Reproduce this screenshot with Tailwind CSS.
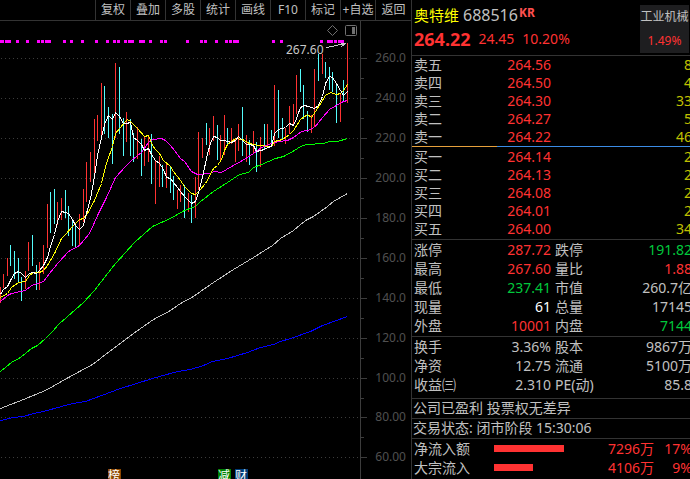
<!doctype html>
<html lang="zh-CN">
  <head>
    <meta charset="utf-8" />
    <meta name="viewport" content="width=device-width, initial-scale=1" />
    <script src="https://cdn.jsdelivr.net/npm/@tailwindcss/browser@4"></script>
    <title>奥特维 688516</title>
  </head>
  <body
    class="flex min-h-screen overflow-hidden bg-black font-['Noto_Sans','Noto_Sans_CJK_SC',sans-serif] text-sm text-[#c0c0c0]"
  >
    <main class="flex-1 min-w-0">
      <nav
        class="flex justify-end h-[21px] border-b border-[#333333] text-xs whitespace-nowrap"
      >
        <button class="w-[35px] border-l border-[#333333]">复权</button>
        <button class="w-[35px] border-l border-[#333333]">叠加</button>
        <button class="w-[35px] border-l border-[#333333]">多股</button>
        <button class="w-[35px] border-l border-[#333333]">统计</button>
        <button class="w-[35px] border-l border-[#333333]">画线</button>
        <button class="w-[35px] border-l border-[#333333]">F10</button>
        <button class="w-[35px] border-l border-[#333333]">标记</button>
        <button class="w-[35px] border-l border-[#333333]">+自选</button>
        <button class="w-[36px] border-l border-[#333333]">返回</button>
      </nav>

      <svg class="block w-full h-auto" viewBox="0 21 411 458" fill="none">
        <!-- grid -->
        <path
          transform="translate(1 .5)"
          stroke="#3c3c3c"
          stroke-dasharray="1 3"
          shape-rendering="crispEdges"
          d="M0 58H357M0 98H357M0 138H357M0 178H357M0 218H357M0 258H357M0 298H357M0 338H357M0 378H357M0 417H357M0 457H357"
        />
        <!-- axis -->
        <path
          transform="translate(.5 .5)"
          stroke="#3c3c3c"
          shape-rendering="crispEdges"
          d="M360 20V480M360 58h6M360 98h6M360 138h6M360 178h6M360 218h6M360 258h6M360 298h6M360 338h6M360 378h6M360 417h6M360 457h6M360 78h3M360 118h3M360 158h3M360 198h3M360 238h3M360 278h3M360 318h3M360 358h3M360 398h3M360 437h3"
        />
        <g fill="#505050" font-size="12" text-anchor="end">
          <text x="406" y="62">260.0</text>
          <text x="406" y="102">240.0</text>
          <text x="406" y="142">220.0</text>
          <text x="406" y="182">200.0</text>
          <text x="406" y="222">180.0</text>
          <text x="406" y="262">160.0</text>
          <text x="406" y="302">140.0</text>
          <text x="406" y="342">120.0</text>
          <text x="406" y="382">100.0</text>
          <text x="406" y="421">80.00</text>
          <text x="406" y="461">60.00</text>
        </g>

        <!-- signal marks -->
        <path
          stroke="#ff00ff"
          stroke-width="3"
          shape-rendering="crispEdges"
          d="M0 41.5h4M5 41.5h6M16 41.5h3M26 41.5h3M37 41.5h3M41 41.5h3M45 41.5h6M63 41.5h3M70 41.5h3M81 41.5h3M95 41.5h3M106 41.5h3M113 41.5h3M117 41.5h3M124 41.5h3M128 41.5h6M139 41.5h6M149 41.5h3M160 41.5h3M164 41.5h3M186 41.5h3M200 41.5h3M204 41.5h3M215 41.5h3M225 41.5h3M229 41.5h3M233 41.5h6M272 41.5h3M280 41.5h3M320 41.5h3M327 41.5h6M334 41.5h3M338 41.5h6"
        />

        <g transform="translate(.5 0)" shape-rendering="crispEdges">
          <!-- up days -->
          <path
            stroke="#ff3232"
            d="M0 287V303M3 274V288M7 258V276M25 271V289M28 242V271M39 262V290M43 245V274M47 204V248M57 202V225M61 198V220M79 214V246M83 189V222M86 162V202M90 152V182M94 119V173M97 115V141M101 83V137M115 63V138M126 112V142M137 127V159M144 137V166M148 136V162M155 161V204M159 156V187M166 164V188M177 190V209M180 185V202M188 193V212M195 177V218M198 132V190M202 138V158M209 128V155M213 116V141M220 135V162M224 115V155M231 128V144M235 138V162M238 124V151M246 135V162M253 131V154M260 137V167M267 124V147M274 85V146M285 128V144M289 106V134M293 104V126M296 75V114M311 115V133M314 69V127M322 54V74M340 93V122M347 43V103"
          />
          <!-- down days -->
          <path
            stroke="#54fcfc"
            d="M10 245V266M14 251V279M18 258V282M21 277V301M32 235V266M36 265V290M50 192V233M54 189V224M65 190V218M68 206V236M72 219V246M75 225V247M104 86V134M108 107V138M112 114V164M119 67V134M123 118V156M130 119V156M133 133V162M141 139V176M151 134V184M162 165V187M170 166V193M173 176V200M184 185V218M191 195V223M206 123V145M217 125V160M227 128V145M242 107V156M249 140V165M256 142V172M264 124V149M271 130V146M278 90V138M282 118V140M300 69V92M303 85V119M307 111V132M318 54V81M325 62V78M329 67V90M332 72V92M336 84V123M343 80V102"
          />
        </g>

        <!-- moving averages -->
        <g transform="translate(.5 .5)" shape-rendering="crispEdges">
          <polyline
            stroke="#0000ff"
            points="0,420 13,417 23,416 33,413 43,411 72,403 85,401 120,388 152,378 177,371 190,369 203,365 212,361 227,358 247,352 260,347 273,344 280,341 290,338 310,331 322,325 347,316"
          />
          <polyline
            stroke="#c0c0c0"
            points="0,408 23,399 45,390 68,377 92,364 113,348 133,333 153,319 170,310 180,303 193,296 200,291 213,282 233,269 253,257 272,245 280,238 293,230 305,220 313,216 327,206 333,201 347,193"
          />
          <polyline
            stroke="#00ff00"
            points="0,371 11,362 20,357 31,348 37,345 45,338 53,330 58,324 75,309 83,302 94,290 104,277 115,263 134,242 152,226 170,218 184,210 195,206 200,201 213,191 227,182 239,174 248,172 253,167 261,164 275,158 283,156 294,150 300,146 306,144 323,143 329,141 337,141 347,138"
          />
          <polyline
            stroke="#ff00ff"
            points="0,301 7,295 11,293 25,290 31,285 43,281 49,273 58,262 68,251 79,245 89,233 98,213 106,197 115,177 126,165 132,159 141,152 148,142 152,139 161,138 165,140 170,145 174,150 180,158 184,161 191,171 197,174 210,173 213,171 221,172 231,166 242,160 253,153 261,147 271,143 278,141 287,140 293,137 301,131 307,130 314,127 322,117 329,109 336,105 343,101 347,100"
          />
          <polyline
            stroke="#ffff00"
            points="0,297 7,293 11,287 18,282 25,281 29,275 33,272 39,272 43,270 47,265 54,253 61,238 65,234 72,226 79,219 83,218 87,213 94,200 101,183 106,163 112,146 115,133 119,128 127,119 130,121 137,128 144,136 148,135 152,145 155,149 159,153 163,160 170,166 173,171 180,180 184,186 191,193 195,194 200,189 205,183 213,168 217,165 221,159 224,150 227,144 231,141 235,138 242,139 249,143 258,145 271,146 274,141 282,139 289,134 293,130 300,119 307,114 311,117 315,111 322,100 325,95 330,92 336,94 340,93 343,90 347,84"
          />
          <polyline
            stroke="#ffffff"
            points="0,294 3,289 7,286 10,280 14,273 18,271 21,273 25,277 29,273 32,272 36,273 39,270 43,265 47,257 50,246 54,234 57,221 61,211 65,212 68,213 72,219 75,225 79,229 83,225 86,213 90,198 94,176 97,155 101,137 104,124 108,115 112,119 115,112 119,116 123,123 126,123 130,122 133,137 137,140 141,144 144,150 148,148 151,154 155,160 159,163 163,169 166,177 170,178 173,182 177,187 180,191 184,196 188,200 191,203 195,201 198,192 202,177 206,158 207,153 210,143 213,136 217,137 220,140 224,140 231,142 235,140 238,136 242,140 246,144 249,144 253,145 256,151 260,150 264,149 267,147 271,146 274,133 278,129 285,127 289,123 293,125 296,118 300,107 304,105 308,106 314,108 318,105 322,96 325,83 329,76 332,77 336,83 340,90 343,95 347,91"
          />
        </g>

        <!-- high label -->
        <text x="286" y="54" fill="#c8c8c8" font-size="12">267.60</text>
        <path
          transform="translate(.5 .5)"
          stroke="#c8c8c8"
          shape-rendering="crispEdges"
          d="M326 47L345 43M340 43L345 43L341 46"
        />

        <!-- chart tools -->
        <path stroke="#707070" d="M332.5 25.5l5 5l-5 5l-5-5z" />
        <rect
          x="345.5"
          y="25.5"
          width="11"
          height="10"
          rx="1"
          stroke="#707070"
        />
        <path fill="#707070" d="M352 27h3v7h-3z" />

        <!-- event badges -->
        <path fill="#8c4600" d="M108 469h13v13h-13z" />
        <path fill="#008000" d="M218 469h13v13h-13z" />
        <path fill="#003c78" d="M235 469h13v13h-13z" />
        <g fill="#ffffff" font-size="12">
          <text x="108" y="480">榜</text>
          <text x="218" y="480">减</text>
          <text x="235" y="480">财</text>
        </g>
      </svg>
    </main>

    <aside
      class="flex-none w-[279px] border-l border-[#333333] overflow-hidden whitespace-nowrap"
    >
      <header
        class="flex justify-between h-[56px] pl-[2px] pr-px pt-[5px] border-b border-[#333333]"
      >
        <div>
          <h1 class="flex text-base leading-5">
            <span class="text-[15px] leading-5 text-[#ffff00]">奥特维</span>
            <span class="ml-1">688516</span>
            <span class="ml-px text-xs leading-4 font-bold text-[#ff5050]"
              >KR</span
            >
          </h1>
          <p class="flex items-center gap-2 mt-1 leading-5 text-[#ff3232]">
            <strong class="text-lg leading-5">264.22</strong>
            <span>24.45</span>
            <span>10.20%</span>
          </p>
        </div>
        <div class="w-[49px] h-[48px] bg-[#1e1e20] text-xs text-center">
          <a href="#" class="block h-6 leading-6">工业机械</a>
          <span class="block h-6 leading-6 text-[#ff3232]">1.49%</span>
        </div>
      </header>

      <table class="table-fixed w-[278px] ml-[2px] leading-[18px]">
        <colgroup>
          <col class="w-[57px]" />
          <col class="w-[80px]" />
          <col class="w-[141px]" />
        </colgroup>
        <tbody class="text-right text-[#ff3232]">
          <tr>
            <th class="text-left font-normal text-[#c0c0c0]">卖五</th>
            <td>264.56</td>
            <td class="text-[#c0c000]">8</td>
          </tr>
          <tr>
            <th class="text-left font-normal text-[#c0c0c0]">卖四</th>
            <td>264.50</td>
            <td class="text-[#c0c000]">4</td>
          </tr>
          <tr>
            <th class="text-left font-normal text-[#c0c0c0]">卖三</th>
            <td>264.30</td>
            <td class="text-[#c0c000]">33</td>
          </tr>
          <tr>
            <th class="text-left font-normal text-[#c0c0c0]">卖二</th>
            <td>264.27</td>
            <td class="text-[#c0c000]">5</td>
          </tr>
          <tr>
            <th class="text-left font-normal text-[#c0c0c0]">卖一</th>
            <td>264.22</td>
            <td class="text-[#c0c000]">46</td>
          </tr>
        </tbody>
      </table>

      <div class="flex h-px mb-px">
        <div class="w-[85px] bg-[#e6a03c]"></div>
        <div class="flex-1 bg-[#3c8ce6]"></div>
      </div>

      <table class="table-fixed w-[278px] ml-[2px] mb-px leading-[18px]">
        <colgroup>
          <col class="w-[57px]" />
          <col class="w-[80px]" />
          <col class="w-[141px]" />
        </colgroup>
        <tbody class="text-right text-[#ff3232]">
          <tr>
            <th class="text-left font-normal text-[#c0c0c0]">买一</th>
            <td>264.14</td>
            <td class="text-[#c0c000]">2</td>
          </tr>
          <tr>
            <th class="text-left font-normal text-[#c0c0c0]">买二</th>
            <td>264.13</td>
            <td class="text-[#c0c000]">2</td>
          </tr>
          <tr>
            <th class="text-left font-normal text-[#c0c0c0]">买三</th>
            <td>264.08</td>
            <td class="text-[#c0c000]">2</td>
          </tr>
          <tr>
            <th class="text-left font-normal text-[#c0c0c0]">买四</th>
            <td>264.01</td>
            <td class="text-[#c0c000]">2</td>
          </tr>
          <tr>
            <th class="text-left font-normal text-[#c0c0c0]">买五</th>
            <td>264.00</td>
            <td class="text-[#c0c000]">34</td>
          </tr>
        </tbody>
      </table>

      <section class="pl-[2px] pb-px border-t border-[#333333]">
        <table class="table-fixed w-[278px] leading-[19px]">
          <colgroup>
            <col class="w-[57px]" />
            <col class="w-[80px]" />
            <col class="w-[61px]" />
            <col class="w-[80px]" />
          </colgroup>
          <tbody class="text-right">
            <tr>
              <th class="text-left font-normal">涨停</th>
              <td class="text-[#ff3232]">287.72</td>
              <th class="pl-1 text-left font-normal">跌停</th>
              <td class="text-[#00c83c]">191.82</td>
            </tr>
            <tr>
              <th class="text-left font-normal">最高</th>
              <td class="text-[#ff3232]">267.60</td>
              <th class="pl-1 text-left font-normal">量比</th>
              <td class="text-[#ff3232]">1.88</td>
            </tr>
            <tr>
              <th class="text-left font-normal">最低</th>
              <td class="text-[#00c83c]">237.41</td>
              <th class="pl-1 text-left font-normal">市值</th>
              <td>260.7亿</td>
            </tr>
            <tr>
              <th class="text-left font-normal">现量</th>
              <td class="text-white">61</td>
              <th class="pl-1 text-left font-normal">总量</th>
              <td>17145</td>
            </tr>
            <tr>
              <th class="text-left font-normal">外盘</th>
              <td class="text-[#ff3232]">10001</td>
              <th class="pl-1 text-left font-normal">内盘</th>
              <td class="text-[#00c83c]">7144</td>
            </tr>
          </tbody>
        </table>
      </section>

      <section class="pl-[2px] pb-1 border-t border-[#333333]">
        <table class="table-fixed w-[278px] leading-[19px]">
          <colgroup>
            <col class="w-[57px]" />
            <col class="w-[80px]" />
            <col class="w-[61px]" />
            <col class="w-[80px]" />
          </colgroup>
          <tbody class="text-right">
            <tr>
              <th class="text-left font-normal">换手</th>
              <td>3.36%</td>
              <th class="pl-1 text-left font-normal">股本</th>
              <td>9867万</td>
            </tr>
            <tr>
              <th class="text-left font-normal">净资</th>
              <td>12.75</td>
              <th class="pl-1 text-left font-normal">流通</th>
              <td>5100万</td>
            </tr>
            <tr>
              <th class="text-left font-normal">收益㈢</th>
              <td>2.310</td>
              <th class="pl-1 text-left font-normal">PE(动)</th>
              <td>85.8</td>
            </tr>
          </tbody>
        </table>
      </section>

      <p class="pl-px pb-px border-t border-[#333333] leading-[18px]">
        公司已盈利 投票权无差异
      </p>
      <p class="pl-px pb-px border-t border-[#333333] leading-[18px]">
        交易状态: 闭市阶段 15:30:06
      </p>

      <section class="pl-[2px] border-t border-[#333333]">
        <table class="table-fixed w-[278px] leading-[19px]">
          <colgroup>
            <col class="w-[80px]" />
            <col class="w-[80px]" />
            <col class="w-[80px]" />
            <col class="w-[38px]" />
          </colgroup>
          <tbody class="text-right text-[#ff3232]">
            <tr>
              <th class="text-left font-normal text-[#c0c0c0]">净流入额</th>
              <td><div class="w-[70px] h-[7px] bg-[#ff3232]"></div></td>
              <td>7296万</td>
              <td>17%</td>
            </tr>
            <tr>
              <th class="text-left font-normal text-[#c0c0c0]">大宗流入</th>
              <td><div class="w-[39px] h-[7px] bg-[#ff3232]"></div></td>
              <td>4106万</td>
              <td>9%</td>
            </tr>
          </tbody>
        </table>
      </section>
    </aside>
  </body>
</html>
